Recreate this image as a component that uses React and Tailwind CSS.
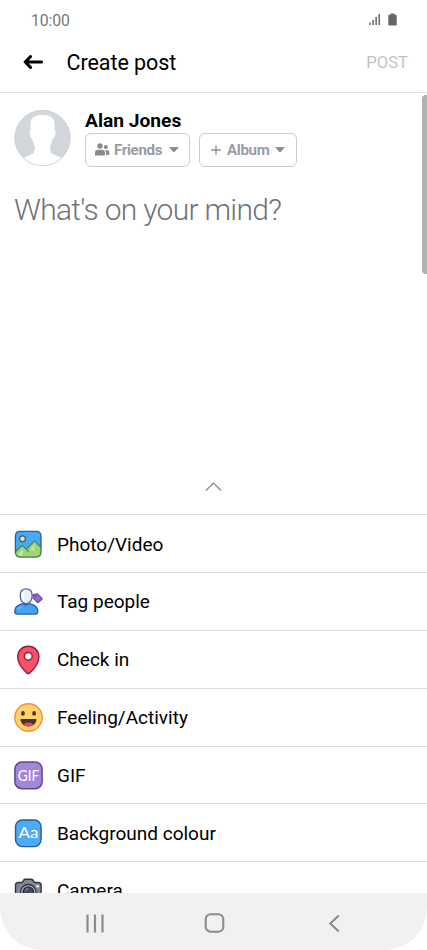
import React from "react";

function SignalIcon() {
  return (
    <svg className="w-[12px] h-[13px]" viewBox="0 0 12 13" fill="#666">
      <rect x="0.3" y="9.5" width="1.5" height="2.5" />
      <rect x="3.4" y="7" width="1.5" height="5" />
      <rect x="6.4" y="4" width="1.5" height="8" />
      <rect x="9.5" y="1" width="1.5" height="11" />
    </svg>
  );
}

function BatteryIcon() {
  return (
    <svg className="w-[9px] h-[13px]" viewBox="0 0 9 13" fill="#666">
      <path d="M2.5 0.5h4v1.2h1.2q1 0 1 1v9q0 .8-.8.8H1.1q-.8 0-.8-.8v-9q0-1 1-1h1.2z" />
    </svg>
  );
}

function Avatar() {
  return (
    <svg className="w-[57px] h-[58px]" viewBox="0 0 58 58">
      <defs>
        <clipPath id="avatar">
          <circle cx="29" cy="29" r="28.2" />
        </clipPath>
      </defs>
      <g clipPath="url(#avatar)">
        <rect width="58" height="58" fill="#d3d6db" />
        <path
          fill="#fff"
          d="M29 5.500C35 5.200 40 7.500 41 12c.6 3 .3 6 .3 9.500 1.200.5 1 2.500.5 4.500-.5 2.300-1.200 3.300-2.200 3.500-.7 3.500-2 5.500-2.600 8-.3 3 0 5.500 1.500 7.300 3 2 8 2.700 12 5.700l1 9.500H6.500l1-9.500c4-3 9-3.700 12-5.700 1.500-1.800 1.800-4.300 1.500-7.300-.6-2.500-1.900-4.500-2.600-8-1-.2-1.700-1.200-2.200-3.500-.5-2-.7-4 .5-4.500 0-3.500-.3-6.500.3-9.500 1-4.500 6-6.800 12-6.500z"
        />
      </g>
      <circle cx="29" cy="29" r="28.2" fill="none" stroke="#c3c6cb" strokeWidth="0.7" />
    </svg>
  );
}

function FriendsIcon() {
  return (
    <svg className="w-[15px] h-[13px]" viewBox="0 0 15 13" fill="#8a8b8f">
      <circle cx="5" cy="3" r="2.7" />
      <path d="M0 12V10q0-3.200 3.200-3.200h3.600Q10 6.800 10 10v2q0 .5-.6.5H.6Q0 12.500 0 12z" />
      <circle cx="10.800" cy="4" r="2.100" />
      <path d="M10 6.900h1.500q2.900 0 2.900 2.800v1.600q0 .6-.6.6h-2.700V9.700q0-1.700-1.100-2.800z" />
    </svg>
  );
}

function Caret() {
  return (
    <svg className="w-[10px] h-[6px]" viewBox="0 0 10 6">
      <path d="M.7.5h8.600L5 5z" fill="#8a8b8f" stroke="#8a8b8f" strokeWidth="0.8" strokeLinejoin="round" />
    </svg>
  );
}

function PhotoIcon() {
  return (
    <svg className="w-[29px] h-[29px]" viewBox="0 0 29 29">
      <rect x="1.400" y="1.300" width="25.600" height="25.800" rx="5" fill="#4aa9f4" />
      <path d="M1.700 22l5.500-5.300q1-1 2 0l3.300 3 7-7.700q1-1 2 0l5.500 5.500v5q0 4.600-4.600 4.600H6.200q-4.500 0-4.500-5.100z" fill="#a1d375" />
      <path d="M4 24l5-5v6.500H7Q4 25.500 4 24z M16 19.500l4.600-5.300v7z" fill="#c3e59f" />
      <path d="M1.500 21.500l5.700-5.300q1-.8 2 0l5.300 5.500M12.500 19.200l7-7.300q1-1 2 0l5.500 5.300" fill="none" stroke="#3c8a55" strokeWidth="1.200" />
      <circle cx="8.500" cy="8.700" r="2.900" fill="#ffdf91" stroke="#35597e" strokeWidth="1.200" />
      <path d="M1.400 21V6.300q0-5 5-5H22q5 0 5 5V17" fill="none" stroke="#28609a" strokeWidth="1.300" />
      <path d="M27 17v5.100q0 5-5 5H6.400q-5 0-5-5V20" fill="none" stroke="#347d50" strokeWidth="1.300" />
    </svg>
  );
}

function TagPeopleIcon() {
  return (
    <svg className="w-[29px] h-[28px]" viewBox="0 0 30 29">
      <path
        d="M9.500 16.200q2.700 2.200 5.400 0 3 .4 5.400 1.500 4.300 2 4.300 6.700 0 2.600-2.600 2.600H3.300Q.8 27 .8 24.400q0-4.700 4.300-6.700 1.900-1.100 4.400-1.500z"
        fill="#45a3f1"
        stroke="#2c5f9e"
        strokeWidth="1.400"
      />
      <path d="M4 22q1-2 4-2.300" fill="none" stroke="#7cc4fa" strokeWidth="1.200" />
      <path d="M12.600.9c4.100 0 6.200 2.800 6.200 6.800 0 5-2.600 8.500-6.200 8.500s-6.200-3.500-6.200-8.500c0-4 2.100-6.800 6.200-6.800z" fill="#e9edf6" stroke="#50679f" strokeWidth="1.400" />
      <path d="M12 2.300c-3 .3-4 2.800-4 5.400 0 3 .9 5.300 2.500 6.500V5z" fill="#fff" />
      <path d="M20 6.800l4-.8 4.800 4.500q.5.600 0 1.200l-3.400 3.200q-.7.500-1.300-.1l-4.100-4z" fill="#8f6dc9" stroke="#6c4aa5" strokeWidth="1.200" strokeLinejoin="round" />
      <circle cx="22.300" cy="8.800" r="0.900" fill="#59418a" />
    </svg>
  );
}

function PinIcon() {
  return (
    <svg className="w-[29px] h-[30px]" viewBox="0 0 29 30">
      <path
        d="M14.300 1.200c6.100 0 10.600 4.600 10.600 10.600 0 6.300-4.700 12.300-9.300 16.300q-1.300 1-2.600 0C8.400 24.100 3.700 18.100 3.700 11.800c0-6 4.500-10.600 10.600-10.600z"
        fill="#fa5068"
        stroke="#961b3b"
        strokeWidth="1.400"
      />
      <circle cx="14.300" cy="11.300" r="3.900" fill="#fff" stroke="#961b3b" strokeWidth="1.500" />
    </svg>
  );
}

function SmileIcon() {
  return (
    <svg className="w-[29px] h-[29px]" viewBox="0 0 29 29">
      <circle cx="14.500" cy="14.500" r="13.700" fill="#ffd368" stroke="#ed944c" strokeWidth="1.400" />
      <ellipse cx="8.900" cy="10.400" rx="1.900" ry="2.400" fill="#403b3e" />
      <ellipse cx="20.100" cy="10.400" rx="1.900" ry="2.400" fill="#403b3e" />
      <path d="M7.300 15.900h14.400q1 0 .8 1.100c-.8 4-4 6.400-8 6.400s-7.200-2.400-8-6.400q-.2-1.100.8-1.100z" fill="#403638" />
      <path d="M9.900 22c1-2.200 2.900-2.900 4.600-2.100 1.700-.8 3.600-.1 4.600 2.100-2.800 1.900-6.400 1.900-9.200 0z" fill="#eb4261" />
    </svg>
  );
}

function GifIcon() {
  return (
    <svg className="w-[29px] h-[29px]" viewBox="0 0 29 29">
      <rect x="0.900" y="1.100" width="27.200" height="26.600" rx="7" fill="#a287d6" stroke="#624699" strokeWidth="1.500" />
      <text x="14.500" y="20" textAnchor="middle" textLength="21.500" lengthAdjust="spacingAndGlyphs" fill="#fff" fontFamily="Lato, sans-serif" fontSize="16">
        GIF
      </text>
    </svg>
  );
}

function BackgroundIcon() {
  return (
    <svg className="w-[29px] h-[29px]" viewBox="0 0 29 29">
      <rect x="1.500" y="1" width="25.600" height="26.600" rx="7" fill="#4babf5" stroke="#285c9a" strokeWidth="1.400" />
      <text x="14.500" y="19" textAnchor="middle" textLength="20" lengthAdjust="spacingAndGlyphs" fill="#fff" fontFamily="Lato, sans-serif" fontSize="15.500">
        Aa
      </text>
    </svg>
  );
}

function CameraIcon() {
  return (
    <svg className="w-[29px] h-[29px]" viewBox="0 0 29 29">
      <path
        d="M4.300 5.500h3.200q1.100-.2 1.700-1.400l.5-1q.5-.9 1.500-.9h6.200q1 0 1.500.9l.5 1q.6 1.200 1.700 1.400h3.200q2.800 0 2.800 2.800v14.400q0 3-3 3H4.500q-3 0-3-3V8.300q0-2.800 2.800-2.800z"
        fill="#808796"
        stroke="#2f3441"
        strokeWidth="1.400"
      />
      <circle cx="14.300" cy="15.200" r="7.700" fill="#b2b6bf" stroke="#30343e" strokeWidth="1.300" />
      <circle cx="14.300" cy="15.200" r="5.300" fill="#414b5d" stroke="#252a34" strokeWidth="1.200" />
      <path d="M11.300 13.700q1-2 3-2" fill="none" stroke="#93a5bb" strokeWidth="1" />
      <circle cx="23.500" cy="9.200" r="1.300" fill="#fff" />
    </svg>
  );
}

const options = [
  { label: "Photo/Video", icon: PhotoIcon },
  { label: "Tag people", icon: TagPeopleIcon },
  { label: "Check in", icon: PinIcon },
  { label: "Feeling/Activity", icon: SmileIcon },
  { label: "GIF", icon: GifIcon },
  { label: "Background colour", icon: BackgroundIcon },
  { label: "Camera", icon: CameraIcon },
];

export default function App() {
  return (
    <div className="w-[427px] h-[950px] bg-white flex flex-col overflow-hidden font-['Roboto',sans-serif] text-black">
      {/* Status bar */}
      <div className="h-10 shrink-0 flex items-center justify-between pl-[31px] pr-[30.500px]">
        <span className="pt-px text-[15.800px] tracking-[-0.1px] text-[#777]">10:00</span>
        <div className="flex items-center gap-[7px] pb-[2px]">
          <SignalIcon />
          <BatteryIcon />
        </div>
      </div>

      {/* Header */}
      <header className="h-[53px] shrink-0 flex items-center pl-[23px] pr-[19px] pb-[7px] border-b border-[#e2e2e4]">
        <button type="button" aria-label="Back" className="pb-[2px]">
          <svg className="w-[20px] h-[16px]" viewBox="0 0 20 16">
            <path d="M7.500 2.700L2.200 8l5.300 5.300M2.500 8h16" fill="none" stroke="#050505" strokeWidth="3.100" strokeLinecap="round" strokeLinejoin="round" />
          </svg>
        </button>
        <h1 className="ml-[23.500px] text-[21.500px] leading-6 tracking-[-0.05px]">Create post</h1>
        <button type="button" disabled className="ml-auto pt-px text-[16.700px] text-[#c2c3c7]">
          POST
        </button>
      </header>

      <div className="h-[421.400px] shrink-0 flex justify-between">
        <div className="flex-1 flex flex-col pl-[14px] pt-4">
          <div className="flex gap-[14px]">
            <Avatar />
            <div className="flex flex-col">
              <p className="h-[23.500px] text-[19.200px] leading-6 font-bold">Alan Jones</p>
              <div className="flex gap-[9px]">
                <button type="button" className="w-[105px] h-[34px] flex items-center pl-[9px] border border-[#cbccd4] rounded-[6px] text-[15px] tracking-[-0.3px] font-bold text-[#999ba6]">
                  <FriendsIcon />
                  <span className="ml-[4px] mr-[7px] pt-px">Friends</span>
                  <Caret />
                </button>
                <button type="button" className="w-[98px] h-[34px] flex items-center pl-[11px] border border-[#cbccd4] rounded-[6px] text-[15px] tracking-[-0.3px] font-bold text-[#999ba6]">
                  <svg className="w-[10px] h-[10px]" viewBox="0 0 10 10">
                    <path d="M5 .3v9.400M.3 5h9.400" stroke="#8a8b8f" strokeWidth="1.300" />
                  </svg>
                  <span className="ml-[6px] mr-[6px] pt-px">Album</span>
                  <Caret />
                </button>
              </div>
            </div>
          </div>
          <p className="mt-[24.500px] text-[30px] leading-9 tracking-[-0.7px] font-light text-[#707276]">What's on your mind?</p>
          <div className="mt-auto mb-[22px] ml-[191px]">
            <svg className="w-[17px] h-[11px]" viewBox="0 0 17 11">
              <path d="M1 9.500l7.500-7.500L16 9.500" fill="none" stroke="#858585" strokeWidth="1.200" />
            </svg>
          </div>
        </div>
        <div className="w-[5.500px] h-[179px] mt-[2px] rounded-l-[4px] bg-[#b1b1b1]" />
      </div>

      <ul className="flex-1 min-h-0 overflow-hidden">
        {options.map(({ label, icon: Icon }) => (
          <li key={label} className="h-[57.800px] flex items-center pl-[14px] pt-px border-t border-[#dedede]">
            <div className="w-[43px]">
              <Icon />
            </div>
            <span className="pt-[0.500px] text-[19px] leading-6">{label}</span>
          </li>
        ))}
      </ul>

      {/* Navigation bar */}
      <nav className="h-[57px] shrink-0 flex items-center pl-[86px] pt-[3px] bg-[#f1f1f1] rounded-b-[42px]">
        <svg className="w-[18px] h-[19px]" viewBox="0 0 18 19">
          <path d="M1.500 .5v18M9 .5v18M16.500 .5v18" stroke="#8c8c8c" strokeWidth="2.200" />
        </svg>
        <svg className="ml-[100px] w-[21px] h-[20px]" viewBox="0 0 21 20">
          <rect x="1.700" y="1.200" width="17.600" height="17.600" rx="5" fill="none" stroke="#8c8c8c" strokeWidth="2.100" />
        </svg>
        <svg className="ml-[103px] w-[12px] h-[19px]" viewBox="0 0 12 19">
          <path d="M10.800 1.500l-8.500 8 8.500 8" fill="none" stroke="#8c8c8c" strokeWidth="2.100" />
        </svg>
      </nav>
    </div>
  );
}
